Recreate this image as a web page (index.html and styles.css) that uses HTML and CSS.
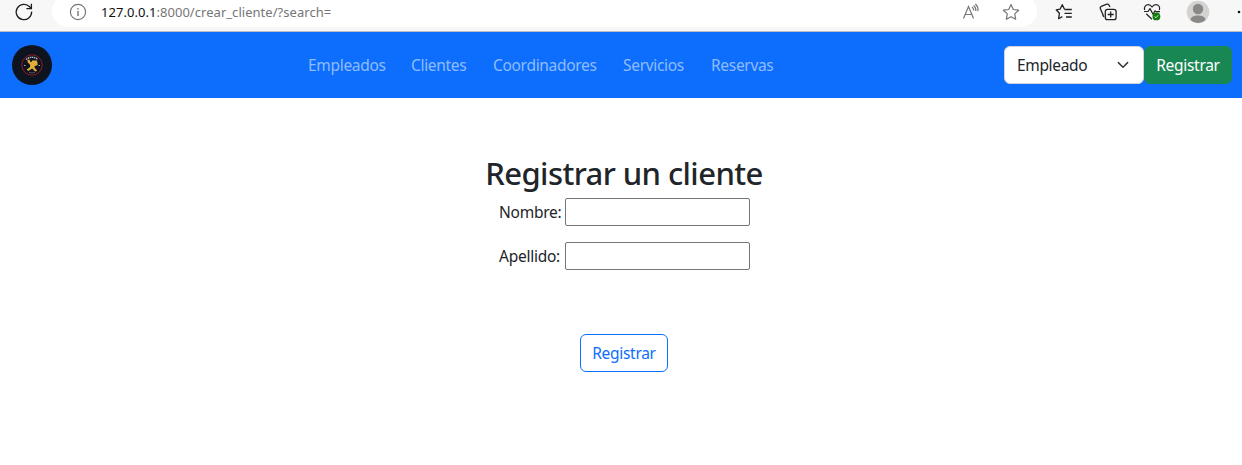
FILE: index.html
```html
<!DOCTYPE html>
<html lang="es">
<head>
<meta charset="utf-8">
<title>Registrar un cliente</title>
<link rel="stylesheet" href="styles.css">
</head>
<body>
<header class="toolbar">
  <svg class="reload" width="20" height="20" viewBox="0 0 20 20" fill="none" stroke="#1b1b1b" stroke-width="1.3"><path d="M17.6 9.6A7.7 7.7 0 1 1 15.6 4.8L17.2 6.4M17.4 1.8V6.6H12.4"/></svg>
  <div class="address">
    <svg class="info" width="18" height="18" viewBox="0 0 18 18" fill="none" stroke="#777" stroke-width="1.2"><circle cx="9" cy="9" r="7.6"/><path d="M9 8v5M9 5v1.4" stroke-width="1.4"/></svg>
    <span class="url"><span class="host">127.0.0.1</span>:8000/crear_cliente/?search=</span>
    <svg class="read" width="18" height="18" viewBox="0 0 18 18" fill="none" stroke="#767676" stroke-width="1.2"><path d="M1.500 15.500 6.500 3.500l5 12M3.200 11.500h6.600M10 4q1.700 1.300 1.600 3.500M11.600 2.400q2.600 2 2.200 5.600M13.300 1q3.400 2.800 2.600 7.200"/></svg>
    <svg class="fav" width="18" height="18" viewBox="0 0 18 18" fill="none" stroke="#767676" stroke-width="1.2" stroke-linejoin="round"><path d="m9 1.600 2.300 4.900 5.300.7-3.900 3.700 1 5.400L9 13.700l-4.700 2.600 1-5.400L1.400 7.200l5.300-.7z"/></svg>
  </div>
  <div class="actions">
    <svg width="18" height="18" viewBox="0 0 18 18" fill="none" stroke="#222" stroke-width="1.3" stroke-linejoin="round"><path d="M11.200 6.400 9.500 6.200 7.300 1.700 5 6.200 1.200 6.800l3.200 3.500-.8 5.400 3.700-2.100M9.500 6.500h7.300M9.500 10.300h7.300M11 14h5.800"/></svg>
    <svg width="18" height="18" viewBox="0 0 18 18" fill="none" stroke="#222" stroke-width="1.3"><rect x="6.300" y="6.300" width="10.800" height="10.400" rx="2.300"/><path d="M11.700 8.500v6M8.700 11.500h6M4.400 12.800 1.300 5.600Q.8 4 2.300 3.300L7.800 1.200q1.600-.3 2.300 1L11 4M5 14 3.600 12"/></svg>
    <svg width="18" height="18" viewBox="0 0 18 18" fill="none" stroke="#222" stroke-width="1.2" stroke-linejoin="round"><path d="M1.700 7C.6 3.500 3 1.700 5.200 1.700 7 1.700 8 2.600 9 4c1-1.400 2-2.300 3.800-2.300C15.600 1.700 17.500 4 16.300 7M1 8.500h4L7 5.600l3 5.600 2-3.400 1 .8h4M3.200 10.700 9 16.200"/><circle cx="13.400" cy="13.400" r="3.900" fill="#107c10" stroke="none"/><path d="m11.600 13.600 1.300 1.200 2.400-2.600" stroke="#fff" stroke-width=".9"/></svg>
    <svg class="avatar" width="24" height="24" viewBox="0 0 24 24"><circle cx="12" cy="12" r="11.300" fill="#d5d3d1"/><circle cx="12" cy="9" r="5.200" fill="#8a8886"/><path d="M4.400 20C5 16.500 8 15.400 12 15.400s7 1.100 7.600 4.600A11.300 11.300 0 0 1 4.400 20" fill="#8a8886"/></svg>
    <svg class="more" width="4" height="18" viewBox="0 0 4 18"><circle cx="2" cy="9" r="1.300" fill="#111"/></svg>
  </div>
</header>
<nav class="navbar">
  <svg class="logo" width="40" height="40" viewBox="0 0 40 40"><circle cx="20" cy="20" r="20" fill="#0d131f"/><circle cx="20" cy="20" r="10.200" fill="none" stroke="#8e1b2b"/><path d="M14 14.500q6-4.500 12 0" fill="none" stroke="#b8b8b8" stroke-width="1.400" stroke-dasharray="1.500 .6"/><path d="M17 27.300q3 1 6 0" fill="none" stroke="#888" stroke-dasharray="1 .7"/><path d="m15.500 15 2-.5 1 2.700 1.500-.7v-1h5l.8 4.500-3 1-.3 1.500 2.700 3.300-2 .7-3-3-4 2.500-1.500-1.500 3.200-2.300.3-2.200-2.700-3z" fill="#e2ad38"/><path d="M12 20.500h1.500M26.500 20.500H28" stroke="#aaa"/></svg>
  <div class="links">
    <a class="l1">Empleados</a><a class="l2">Clientes</a><a class="l3">Coordinadores</a><a class="l4">Servicios</a><a class="l5">Reservas</a>
  </div>
  <div class="register">
    <div class="select"><span>Empleado</span><svg class="chevron" width="14" height="14" viewBox="0 0 16 16" fill="none" stroke="#343a40" stroke-width="1.7" stroke-linecap="round" stroke-linejoin="round"><path d="m2.700 5.300 5.300 5.300 5.300-5.300"/></svg></div>
    <button class="btn btn-success">Registrar</button>
  </div>
</nav>
<main>
  <h1>Registrar un cliente</h1>
  <form>
    <label class="row"><span>Nombre:</span><input type="text"></label>
    <label class="row"><span>Apellido:</span><input type="text"></label>
    <button type="button" class="btn btn-outline">Registrar</button>
  </form>
</main>
</body>
</html>
```
FILE: styles.css
```css
* { box-sizing: border-box; }
body { margin: 0; height: 465px; overflow: hidden; background: #fff; color: #212529; font: 15.5px/24px "Segoe UI", "Noto Sans", sans-serif; }
svg { display: block; flex: none; }
.toolbar { display: flex; height: 32px; background: #f7f7f7; border-bottom: 1px solid #b9bdc4; }
.reload { margin: 2px 0 0 14px; }
.address { display: flex; align-items: center; width: 985px; height: 32px; margin: -5px 0 0 18px; padding: 2px 17px 0 17px; background: #fff; border-radius: 16px; }
.url { margin-left: 14px; color: #767676; font-size: 13px; letter-spacing: .04px; white-space: nowrap; }
.host { color: #111; }
.read { margin-left: auto; }
.fav { margin-left: 22px; }
.actions { display: flex; gap: 26px; margin: 3px 0 0 18px; }
.avatar { margin: -3px 0 0 -1px; }
.more { margin-left: 1px; }
.navbar { display: flex; align-items: center; height: 66px; padding: 0 10px 0 12px; background: #0d6efd; }
.links { display: flex; margin-left: 256px; color: #8fbcfe; letter-spacing: -.31px; white-space: nowrap; }
.l1 { width: 103px; }
.l2 { width: 82px; }
.l3 { width: 130px; }
.l4 { width: 88px; }
.register { display: flex; margin-left: auto; }
.select { display: flex; align-items: center; justify-content: space-between; width: 140px; height: 38px; padding: 0 12px; background: #fff; border: 1px solid #ced4da; border-radius: 6px; letter-spacing: -.35px; }
.chevron { margin-right: 1px; }
.btn { width: 88px; height: 38px; padding: 0; border: 1px solid; border-radius: 6px; font: inherit; letter-spacing: -.3px; }
.btn-success { color: #fff; background: #198754; border-color: #198754; }
.btn-outline { margin-top: 48px; color: #0d6efd; background: #fff; border-color: #0d6efd; }
main { padding: 56px 0 0 6px; text-align: center; }
h1 { margin: 0 0 6px; font-size: 31px; line-height: 38px; font-weight: 550; letter-spacing: -.58px; }
form { display: flex; flex-direction: column; align-items: center; }
.row { display: flex; align-items: center; width: 252px; height: 28px; margin-bottom: 16px; }
.row span { width: 67px; padding-left: 1px; text-align: left; letter-spacing: -.25px; white-space: nowrap; }
.row input { width: 185px; height: 28px; border: 1px solid #767676; border-radius: 2px; }
```
